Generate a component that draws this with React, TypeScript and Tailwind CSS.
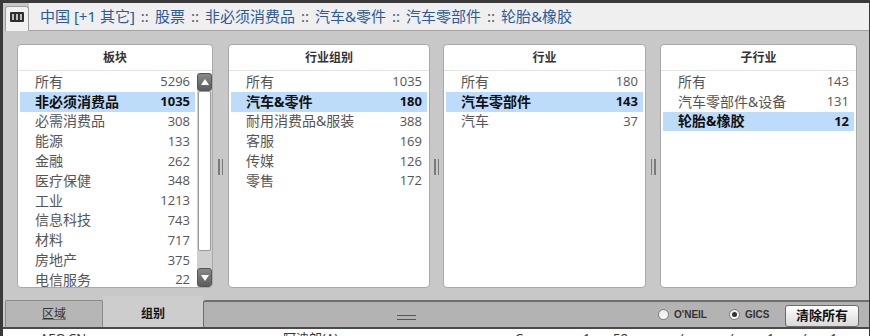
import React from "react";

type Item = { label: string; count: number; selected?: boolean };

const sectors: Item[] = [
  { label: "所有", count: 5296 },
  { label: "非必须消费品", count: 1035, selected: true },
  { label: "必需消费品", count: 308 },
  { label: "能源", count: 133 },
  { label: "金融", count: 262 },
  { label: "医疗保健", count: 348 },
  { label: "工业", count: 1213 },
  { label: "信息科技", count: 743 },
  { label: "材料", count: 717 },
  { label: "房地产", count: 375 },
  { label: "电信服务", count: 22 },
];

const groups: Item[] = [
  { label: "所有", count: 1035 },
  { label: "汽车&零件", count: 180, selected: true },
  { label: "耐用消费品&服装", count: 388 },
  { label: "客服", count: 169 },
  { label: "传媒", count: 126 },
  { label: "零售", count: 172 },
];

const industries: Item[] = [
  { label: "所有", count: 180 },
  { label: "汽车零部件", count: 143, selected: true },
  { label: "汽车", count: 37 },
];

const subIndustries: Item[] = [
  { label: "所有", count: 143 },
  { label: "汽车零部件&设备", count: 131 },
  { label: "轮胎&橡胶", count: 12, selected: true },
];

const crumbs = ["中国 [+1 其它]", "股票", "非必须消费品", "汽车&零件", "汽车零部件", "轮胎&橡胶"];

function Row({ item }: { item: Item }) {
  return (
    <div
      className={`flex items-center justify-between h-[19.8px] mx-[2px] pl-[15px] pr-[5px] text-[14px] leading-none ${
        item.selected ? "bg-[#bddcfb] font-bold text-[#111]" : "text-[#555]"
      }`}
    >
      <span>{item.label}</span>
      <span className="font-['Open_Sans'] text-[13px]">{item.count}</span>
    </div>
  );
}

function Panel({ title, items, width, scroll = false }: { title: string; items: Item[]; width: string; scroll?: boolean }) {
  return (
    <div className={`${width} h-[244px] shrink-0 bg-white border border-[#a9a9a9] rounded-[4px] flex flex-col overflow-hidden`}>
      <div className="h-[26px] shrink-0 border-b border-[#e3e3e3] flex items-center justify-center text-[12px] font-bold text-[#333]">
        {title}
      </div>
      <div className="flex-1 flex min-h-0">
        <div className="flex-1 pt-[1px] overflow-hidden">
          {items.map((it) => (
            <Row key={it.label} item={it} />
          ))}
        </div>
        {scroll && (
          <div className="w-[15px] mt-[2px] flex flex-col bg-[#cfcfcf] rounded-[2px]">
            <div className="h-[18px] shrink-0 rounded-[3px] bg-gradient-to-b from-[#8a8a8a] to-[#5c5c5c] border border-[#555] flex items-center justify-center">
              <div className="w-0 h-0 border-l-[4px] border-r-[4px] border-b-[6px] border-l-transparent border-r-transparent border-b-white" />
            </div>
            <div className="h-[160px] shrink-0 mx-[1px] bg-white border border-[#9a9a9a] rounded-[2px]" />
            <div className="flex-1" />
            <div className="h-[19px] shrink-0 rounded-[3px] bg-gradient-to-b from-[#8a8a8a] to-[#5c5c5c] border border-[#555] flex items-center justify-center">
              <div className="w-0 h-0 border-l-[4px] border-r-[4px] border-t-[6px] border-l-transparent border-r-transparent border-t-white" />
            </div>
          </div>
        )}
      </div>
    </div>
  );
}

function Splitter({ width }: { width: string }) {
  return (
    <div className={`${width} shrink-0 flex items-center justify-center pb-[6px]`}>
      <div className="flex gap-[2px]">
        <div className="w-[1.5px] h-[16px] bg-[#7a7a7a]" />
        <div className="w-[1.5px] h-[16px] bg-[#7a7a7a]" />
      </div>
    </div>
  );
}

function Radio({ label, checked }: { label: string; checked?: boolean }) {
  return (
    <div className="flex items-center gap-[5px]">
      <div className="w-[11px] h-[11px] rounded-full border border-[#7c7c7c] bg-gradient-to-b from-[#e9e9e9] to-[#fdfdfd] flex items-center justify-center">
        {checked && <div className="w-[5px] h-[5px] rounded-full bg-[#333]" />}
      </div>
      <span className="text-[10px] font-bold text-[#333] font-['Liberation_Sans']">{label}</span>
    </div>
  );
}

export default function App() {
  return (
    <div className="w-[870px] h-[336px] overflow-hidden flex flex-col bg-[#c8c8c8] border-t-[3px] border-l-[3px] border-r border-[#3a3a3a] font-['Noto_Sans','Noto_Sans_CJK_SC',sans-serif]">
      {/* header */}
      <div className="h-[28px] shrink-0 flex bg-[#c8c8c8]">
        <div className="w-[24px] shrink-0 ml-[2px] mt-[3px] bg-[#f1f1f1] border-t border-l border-r border-[#9c9c9c] rounded-t-[3px] flex justify-center pt-[5px]">
          <div className="w-[14px] h-[10px] bg-[#2e2e2e] rounded-[1px] flex items-center justify-center gap-[2px]">
            <div className="w-[2px] h-[6px] bg-[#bcbcbc]" />
            <div className="w-[2px] h-[6px] bg-[#bcbcbc]" />
            <div className="w-[2px] h-[6px] bg-[#bcbcbc]" />
          </div>
        </div>
        <div className="flex-1 bg-[#efefef] border-b border-[#a3a3a3] flex items-center pl-[11px] pb-[1px] text-[15px] text-[#2c5a98]">
          {crumbs.map((c, i) => (
            <React.Fragment key={c}>
              {i > 0 && <span className="mx-[6px] text-[#4a5d78]">::</span>}
              <span>{c}</span>
            </React.Fragment>
          ))}
        </div>
      </div>

      {/* panels */}
      <div className="h-[265px] shrink-0 flex pl-[14px] pt-[13px]">
        <Panel title="板块" items={sectors} width="w-[196px]" scroll />
        <Splitter width="w-[15px]" />
        <Panel title="行业组别" items={groups} width="w-[202px]" />
        <Splitter width="w-[13px]" />
        <Panel title="行业" items={industries} width="w-[203px]" />
        <Splitter width="w-[14px]" />
        <Panel title="子行业" items={subIndustries} width="w-[197px]" />
      </div>

      {/* bottom bar */}
      <div className="h-[31px] shrink-0 flex pt-[4px]">
        <div className="w-[98px] shrink-0 ml-[2px] bg-[#b6b6b6] border-t border-l border-r border-[#8a8a8a] rounded-t-[2px] flex items-center justify-center text-[12px] text-[#333] underline decoration-[#777]">
          区域
        </div>
        <div className="w-[100px] shrink-0 -mt-[4px] bg-[#cdcdcd] flex items-center justify-center pt-[4px] text-[12px] font-bold text-[#111]">
          组别
        </div>
        <div className="flex-1 bg-[#b3b3b3] border-t-2 border-l border-[#6e6e6e] rounded-tl-[3px] flex items-center">
          <div className="w-[404px] shrink-0 flex flex-col items-center gap-[3px] pt-[6px]">
            <div className="w-[19px] h-[1px] bg-[#555]" />
            <div className="w-[19px] h-[1px] bg-[#555]" />
          </div>
          <div className="flex-1 flex items-center pl-[50px] gap-[22px]">
            <Radio label="O'NEIL" />
            <Radio label="GICS" checked />
          </div>
          <div className="w-[74px] h-[22px] mr-[10px] mt-[3px] border border-[#6a6a6a] rounded-[3px] bg-gradient-to-b from-white to-[#d9d9d9] flex items-center justify-center text-[13px] font-bold text-[#111]">
            清除所有
          </div>
        </div>
      </div>

      {/* table peeking below */}
      <div className="flex-1 bg-white border-t-2 border-[#4a4a4a] relative overflow-hidden text-[13px] text-[#333] leading-none">
        <span className="absolute left-[37px] top-[3px]">AEO.CN</span>
        <span className="absolute left-[280px] top-[3px]">阿迪朗(A)</span>
        <span className="absolute left-[512px] top-[3px]">C</span>
        <span className="absolute left-[580px] top-[3px]">1</span>
        <span className="absolute left-[610px] top-[3px]">58</span>
        <span className="absolute left-[677px] top-[3px]">(</span>
        <span className="absolute left-[727px] top-[3px]">(</span>
        <span className="absolute left-[764px] top-[3px]">1</span>
        <span className="absolute left-[800px] top-[3px]">(</span>
        <span className="absolute left-[827px] top-[3px]">1</span>
      </div>
    </div>
  );
}
